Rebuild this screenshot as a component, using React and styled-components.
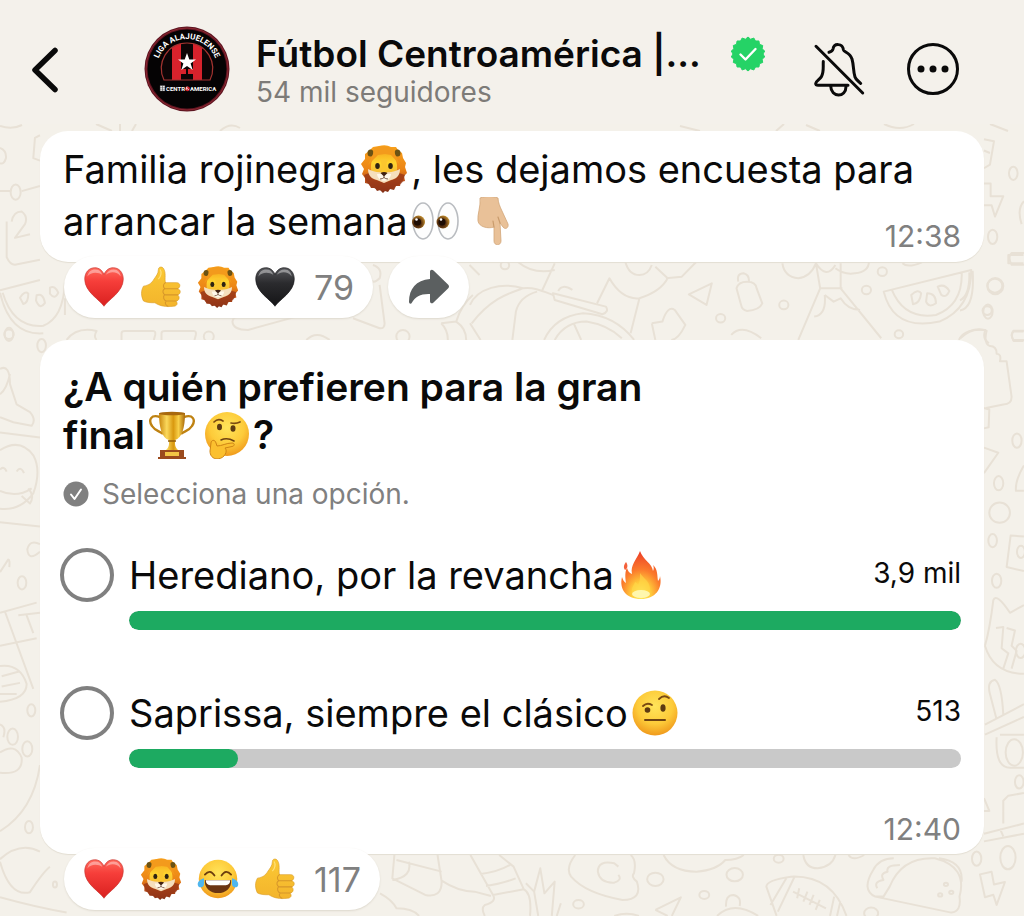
import { useState } from 'react';
import styled, { createGlobalStyle } from 'styled-components';

const OPTIONS = [
  { id: 'herediano', label: 'Herediano, por la revancha', emoji: 'fire', votes: 3900, count: '3,9 mil' },
  { id: 'saprissa', label: 'Saprissa, siempre el clásico', emoji: 'eyebrow', votes: 513, count: '513' },
];
const MAX_VOTES = 3900;

const Gradients = () => (
  <HiddenSvg aria-hidden="true">
    <defs>
      <linearGradient id="red" x1="0" y1="0" x2="0" y2="1">
        <stop offset="0" stopColor="#ff6a5c" />
        <stop offset="0.35" stopColor="#f63e3a" />
        <stop offset="1" stopColor="#d9201f" />
      </linearGradient>
      <linearGradient id="black" x1="0" y1="0" x2="0" y2="1">
        <stop offset="0" stopColor="#55565a" />
        <stop offset="0.4" stopColor="#2b2b2e" />
        <stop offset="1" stopColor="#141416" />
      </linearGradient>
      <linearGradient id="mane" x1="0" y1="0" x2="0" y2="1">
        <stop offset="0" stopColor="#f9a21c" />
        <stop offset="0.5" stopColor="#ec8616" />
        <stop offset="0.72" stopColor="#c4561c" />
        <stop offset="1" stopColor="#7c2c16" />
      </linearGradient>
      <linearGradient id="lionFace" x1="0" y1="0" x2="0" y2="1">
        <stop offset="0" stopColor="#f6a81e" />
        <stop offset="0.4" stopColor="#ffd42e" />
        <stop offset="1" stopColor="#f0a93a" />
      </linearGradient>
      <linearGradient id="thumb" x1="0" y1="0" x2="0" y2="1">
        <stop offset="0" stopColor="#fbc934" />
        <stop offset="1" stopColor="#f3b42c" />
      </linearGradient>
      <radialGradient id="face" cx="0.5" cy="0.35" r="0.65">
        <stop offset="0" stopColor="#ffe45a" />
        <stop offset="0.6" stopColor="#fdcb3a" />
        <stop offset="1" stopColor="#f09a1c" />
      </radialGradient>
      <linearGradient id="gold" x1="0" y1="0" x2="1" y2="0">
        <stop offset="0" stopColor="#c8860f" />
        <stop offset="0.3" stopColor="#fbd95c" />
        <stop offset="0.55" stopColor="#d9980f" />
        <stop offset="0.75" stopColor="#f8cf48" />
        <stop offset="1" stopColor="#a96808" />
      </linearGradient>
      <radialGradient id="flame" cx="0.5" cy="0.9" r="0.85">
        <stop offset="0" stopColor="#fff36b" />
        <stop offset="0.3" stopColor="#ffc93a" />
        <stop offset="0.6" stopColor="#fb7c2c" />
        <stop offset="1" stopColor="#ee4528" />
      </radialGradient>
      <radialGradient id="iris" cx="0.4" cy="0.6" r="0.6">
        <stop offset="0" stopColor="#2a1405" />
        <stop offset="0.55" stopColor="#5d3410" />
        <stop offset="1" stopColor="#b9862c" />
      </radialGradient>
    </defs>
  </HiddenSvg>
);

const HEART = 'M24 46C20 39 2 30 2 15C2 7 7 2 13.500 2C18.500 2 22 5 24 9.500C26 5 29.500 2 34.500 2C41 2 46 7 46 15C46 30 28 39 24 46Z';

const EMOJIS = {
  heart: {
    title: '❤️',
    art: (
      <>
        <path d={HEART} fill="url(#red)" stroke="#c93a34" strokeWidth="0.8" />
        <path d="M5 12C6 7 9 4 14 4C18 4 21 6 22 10C18 7 9 6 5 12Z" fill="#fff" opacity="0.4" />
        <path d="M26 10C28 6 31 4 35 4C40 4 43 8 43 12C39 6 31 6 26 10Z" fill="#fff" opacity="0.4" />
      </>
    ),
  },
  blackHeart: {
    title: '🖤',
    art: (
      <>
        <path d={HEART} fill="url(#black)" stroke="#1a1a1c" strokeWidth="0.8" />
        <path d="M5 12C6 7 9 4 14 4C18 4 21 6 22 10C18 7 9 6 5 12Z" fill="#fff" opacity="0.4" />
        <path d="M26 10C28 6 31 4 35 4C40 4 43 8 43 12C39 6 31 6 26 10Z" fill="#fff" opacity="0.4" />
      </>
    ),
  },
  thumb: {
    title: '👍',
    art: (
      <>
        <path
          d="M21 4C21 1 25 0 27 3C30 8 28 14 29 19H42C46 19 47 24 43 26C47 27 47 32 43 33C46 35 45 40 41 40C44 43 42 46 38 46C30 47 23 46 17 42C12 42 8 42 4 40C1 34 1 28 4 23C10 22 13 20 16 15C18 12 21 9 21 4Z"
          fill="url(#thumb)"
          stroke="#d99a22"
          strokeWidth="0.7"
        />
        <path d="M29 19C26 21 26 25 29 26M30 26H43M28 26C25 28 26 32 29 33H43M28 33C26 35 27 39 30 40H41M30 40C28 42 29 45 32 46" fill="none" stroke="#d6962a" strokeWidth="1.200" strokeLinecap="round" />
        <path d="M23 4C25 7 24 12 21 15" fill="none" stroke="#ffe07a" strokeWidth="1.400" />
      </>
    ),
  },
  lion: {
    title: '🦁',
    art: (
      <>
        <path
          d="M19 1Q26 -1 31 2L36 2L38 5L42 8L43 13L46 18L45 22L47 28L44 31L45 36L41 37L40 41L36 41L34 45L30 44L28 47L25 46L23 48L20 45L17 46L15 43L11 43L9 39L5 38L5 33L2 29L4 24L1 19L5 14L5 9L9 6L13 2Z"
          fill="url(#mane)"
        />
        <path d="M4 30L9 28L13 34L24 38L35 34L39 28L45 30L42 38L36 41L30 44L25 46L18 45L10 41L6 36Z" fill="#943618" opacity="0.75" />
        <ellipse cx="10.500" cy="8" rx="3" ry="3.500" fill="#6b5214" />
        <ellipse cx="37.500" cy="8" rx="3" ry="3.500" fill="#6b5214" />
        <path d="M24 6C32 6 36 12 37 20C38 29 33 36 24 36C15 36 10 29 11 20C12 12 16 6 24 6Z" fill="url(#lionFace)" />
        <path d="M14 3Q24 -1 34 4L35 9L40 20L31 10L25 9L18 10L8 20L13 9Z" fill="#f39a1c" />
        <path d="M8 24C12 26 18 28 22 27H26C30 28 36 26 40 24C40 31 36 34 31 35L24 38L17 35C12 34 8 31 8 24Z" fill="#f5dfbd" />
        <path d="M17 29C18 38 30 38 31 29Z" fill="#fff8ea" />
        <path d="M20 14C22 19 22 23 21 28H27C26 23 26 19 28 14Z" fill="#fbc62e" />
        <ellipse cx="17.500" cy="21" rx="2.300" ry="3" fill="#2e2312" />
        <ellipse cx="30.500" cy="21" rx="2.300" ry="3" fill="#2e2312" />
        <path d="M20.500 28Q24 26 27.500 28L24 31.500Z" fill="#3f2013" />
        <path d="M24 31V33M20 34Q22.500 34 24 32.500Q25.500 34 28 34" fill="none" stroke="#7a5a48" strokeWidth="1" />
      </>
    ),
  },
  eyes: {
    title: '👀',
    art: (
      <>
        <ellipse cx="12" cy="24" rx="10" ry="18" fill="#fdfdfd" stroke="#b9bcc0" strokeWidth="1.600" />
        <ellipse cx="37" cy="24" rx="10" ry="18" fill="#fdfdfd" stroke="#b9bcc0" strokeWidth="1.600" />
        <circle cx="7.500" cy="25" r="6.500" fill="url(#iris)" />
        <circle cx="32" cy="25" r="6.500" fill="url(#iris)" />
        <circle cx="6.500" cy="25" r="3.500" fill="#1e0d04" />
        <circle cx="31" cy="25" r="3.500" fill="#1e0d04" />
        <circle cx="5.500" cy="22.500" r="1.300" fill="#fff" />
        <circle cx="30" cy="22.500" r="1.300" fill="#fff" />
      </>
    ),
  },
  pointDown: {
    title: '👇🏼',
    art: (
      <>
        <path
          d="M5 1C10 -1 18 -1 23 1C23 5 25 10 27 14L33 27C34 31 30 33 28 30L25 26L26 44C26 49 19 49 19 44V30C13 32 4 30 3 24C2 18 6 9 5 1Z"
          fill="#e9c198"
          stroke="#d2a678"
          strokeWidth="0.800"
        />
        <path d="M19 30L18 24M25 26L23 20" fill="none" stroke="#c99b6c" strokeWidth="1.200" strokeLinecap="round" />
      </>
    ),
  },
  trophy: {
    title: '🏆',
    art: (
      <>
        <path d="M12 6C3 3 0 9 4 15C7 20 12 20 15 23M36 6C45 3 48 9 44 15C41 20 36 20 33 23" fill="none" stroke="#bf8212" strokeWidth="2.400" />
        <path d="M11 2H37C37 17 34 27 27 29V33C27 36 29 38 31 40H17C19 38 21 36 21 33V29C14 27 11 17 11 2Z" fill="url(#gold)" />
        <ellipse cx="24" cy="2.500" rx="13" ry="1.800" fill="#a8690e" />
        <path d="M12 39H36V46H38V48H10V46H12Z" fill="#9b4a1d" />
        <path d="M17 41H31V45H17Z" fill="#f3c545" />
        <path d="M20 30H28" stroke="#8f5a08" strokeWidth="1.500" />
      </>
    ),
  },
  thinking: {
    title: '🤔',
    art: (
      <>
        <circle cx="25" cy="23" r="22" fill="url(#face)" />
        <path d="M12 11Q16 7 21 10M29 12Q34 13 38 11" fill="none" stroke="#7a4a12" strokeWidth="1.700" strokeLinecap="round" />
        <ellipse cx="17.500" cy="16" rx="2.500" ry="3.300" fill="#5d3a12" />
        <ellipse cx="31" cy="17.500" rx="2.500" ry="3.300" fill="#5d3a12" />
        <path d="M19 29Q25 26 32 30" fill="none" stroke="#6e4212" strokeWidth="1.600" strokeLinecap="round" />
        <path
          d="M9 32C9 29 13 28 14 32L15 35C20 35 24 32 30 32C33 32 33 35 30 35.500L23 37C26 40 23 47 16 48C10 48 8 44 8 40Z"
          fill="#fbc02f"
          stroke="#cf8515"
          strokeWidth="1"
        />
      </>
    ),
  },
  fire: {
    title: '🔥',
    art: (
      <>
        <path
          d="M23 0C26 9 35 12 36 20C37 18 37 16 36 14C41 18 40 25 41 30C42 29 43 27 43 25C46 38 38 48 24 48C9 48 2 38 5 26C6 29 7 31 9 32C8 26 8 20 10 17C11 20 12 22 15 23C13 14 20 8 23 0Z"
          fill="url(#flame)"
        />
        <path d="M9 11C7 14 6 16 8 19C11 17 11 14 9 11Z" fill="#f4603a" />
        <path d="M23 22C26 27 33 30 33 38C33 44 29 47 24 47C18 47 14 43 15 38C16 34 17 34 18 31C20 32 21 33 21 34C23 31 23 27 23 22Z" fill="#ffd84a" opacity="0.6" />
        <ellipse cx="24" cy="43" rx="9" ry="4" fill="#fff9b8" opacity="0.9" />
      </>
    ),
  },
  eyebrow: {
    title: '🤨',
    art: (
      <>
        <circle cx="24" cy="24" r="22.500" fill="url(#face)" />
        <path d="M12 17Q16 13 21 16M28 10Q33 5 38 9" fill="none" stroke="#7a4a12" strokeWidth="1.800" strokeLinecap="round" />
        <ellipse cx="16.500" cy="21" rx="2.800" ry="2.800" fill="#5d3a12" />
        <ellipse cx="32" cy="19" rx="2.600" ry="3.800" fill="#5d3a12" />
        <path d="M14 31H34" stroke="#6e4212" strokeWidth="2" strokeLinecap="round" />
      </>
    ),
  },
  joy: {
    title: '😂',
    art: (
      <>
        <circle cx="24" cy="24" r="22" fill="url(#face)" />
        <path d="M9 19Q15 12 20 20M28 20Q33 12 39 19" fill="none" stroke="#6b3d0e" strokeWidth="2" strokeLinecap="round" />
        <path d="M9 25H39C40 34 33 40 24 40C15 40 8 34 9 25Z" fill="#6b3512" />
        <path d="M10 25.500H38C38 29 36 31 33 31H15C12 31 10 29 10 25.500Z" fill="#fff" />
        <path d="M8 23C4 24 0 27 1 31C2 35 8 34 8 30ZM40 23C44 24 48 27 47 31C46 35 40 34 40 30Z" fill="#4fb6ee" />
      </>
    ),
  },
};

const Emoji = ({ name, size }) => (
  <EmojiSvg viewBox="0 0 48 48" role="img" aria-label={EMOJIS[name].title} $size={size}>
    {EMOJIS[name].art}
  </EmojiSvg>
);

const ClubLogo = () => (
  <LogoSvg viewBox="0 0 86 86" role="img" aria-label="Liga Alajuelense Centroamérica">
    <circle cx="43" cy="43" r="42.500" fill="#5c1420" />
    <circle cx="43" cy="43" r="41" fill="none" stroke="#8d2731" strokeWidth="1" />
    <circle cx="43" cy="43" r="39.500" fill="#050304" />
    <clipPath id="crest">
      <path d="M20 54C12 37 23 17 43 17C63 17 74 37 66 54Z" />
    </clipPath>
    <g clipPath="url(#crest)">
      <rect x="10" y="10" width="70" height="50" fill="#0d0506" />
      <rect x="28" y="15" width="9" height="42" fill="#d8222c" />
      <rect x="49" y="15" width="9" height="42" fill="#d8222c" />
      <rect x="28" y="43" width="30" height="5" fill="#d8222c" />
      <rect x="42" y="42" width="2" height="12" fill="#0d0506" />
    </g>
    <path d="M20 54C12 37 23 17 43 17C63 17 74 37 66 54Z" fill="none" stroke="#a23330" strokeWidth="1.200" />
    <path d="M43 27L45.300 33.500H52L46.600 37.500L48.700 44L43 40L37.300 44L39.400 37.500L34 33.500H40.700Z" fill="#fff" />
    <path id="arc" d="M14 34A30.500 30.500 0 0 1 72 34" fill="none" />
    <LogoText $size={8}>
      <textPath href="#arc" startOffset="50%" textAnchor="middle">LIGA ALAJUELENSE</textPath>
    </LogoText>
    <path d="M16 59.500H21V65H16ZM18.500 59.500V65M16 61.300H21M16 63.200H21" fill="#fff" stroke="#333" strokeWidth="0.500" />
    <LogoText x="41" y="65" textAnchor="end" $size={6}>CENTR</LogoText>
    <circle cx="43.500" cy="62.800" r="2.400" fill="#d8222c" />
    <path d="M42 61.500L45 64M43 60.500L42 64" stroke="#fff" strokeWidth="0.700" />
    <LogoText x="46" y="65" $size={6}>AMERICA</LogoText>
  </LogoSvg>
);

const Wallpaper = () => (
  <WallpaperSvg viewBox="0 0 1024 916" preserveAspectRatio="xMidYMin slice" aria-hidden="true">
    {/* top edge, under the header */}
    <path d="M0 126Q12 130 22 125M96 124L112 131M120 124V131M136 124L132 131M220 131Q230 122 240 128M680 126L700 131M784 124L776 131M806 125L820 131M884 124Q900 132 914 124M990 124L1008 131" />
    {/* strip between the two messages */}
    <g transform="translate(0 255) scale(0.333)">
      <path d="M200 255Q230 215 290 228Q280 245 290 255M365 255V235Q365 228 375 228H460Q468 228 466 240L462 255M485 255V235Q485 228 495 228H582Q590 228 588 240L584 255M890 185L745 225Q700 225 698 200Q700 185 720 185M920 255Q950 225 990 255M1060 190L1140 220Q1155 222 1155 205L1140 90M1120 30Q1150 40 1140 70Q1120 90 1110 70M1325 205L1370 200Q1385 150 1420 120M1325 205Q1345 225 1345 255M1370 200Q1400 220 1400 255M1410 30L1440 60M195 130V180" />
      <circle cx="27" cy="238" r="14" /><circle cx="627" cy="245" r="15" /><circle cx="1210" cy="245" r="20" />
    </g>
    <g transform="translate(470 255) scale(0.353 0.333)">
      <path d="M0 150C20 100 90 80 150 100C110 115 60 130 5 205M150 100C180 95 210 110 235 120M0 205L30 255M120 255L130 170Q140 125 190 110M205 105L240 25M135 20Q180 60 240 45M235 115L385 155Q395 170 375 178L240 135ZM250 108Q260 85 290 105M210 255Q240 185 320 175Q410 180 465 255M240 255Q270 200 330 200Q390 210 430 250M295 208L315 255M360 145L395 70Q430 135 480 130L455 235M480 130Q540 110 560 70L525 35M440 20Q450 60 480 60Q505 60 515 30M555 70L600 65L640 22M620 118L685 85L670 150ZM515 205L545 200Q560 150 580 165L610 210Q590 255 570 255M515 205L525 255" />
      <path d="M755 100Q760 80 785 80Q810 80 812 100L828 145Q820 165 785 168Q770 165 768 150ZM760 80Q755 55 775 55Q792 60 790 80M740 240Q770 205 825 250M885 25Q890 65 930 70Q965 65 980 25L992 100L930 255M980 25Q1010 75 1035 30M1050 25V100L1165 250M992 100H1055M1035 40Q1060 60 1090 55Q1130 50 1130 20M1005 120Q1010 180 975 185M1005 120L1030 140L1050 130Q1070 165 1105 165" />
      <path d="M1172 110L1420 45Q1420 160 1330 200Q1200 230 1172 110ZM1195 105Q1230 195 1320 180Q1395 150 1393 55M1250 120Q1270 100 1278 115Q1275 145 1255 148ZM1295 115Q1320 115 1320 145Q1300 160 1292 140ZM1325 95Q1345 85 1358 108Q1350 130 1335 120ZM1225 25Q1240 40 1280 22M1385 255Q1400 220 1460 225Q1450 250 1470 265M1568 0H1525V25H1568M1568 230H1540Q1530 240 1540 258H1568" />
      <circle cx="99" cy="31" r="12" /><circle cx="710" cy="190" r="13" /><circle cx="889" cy="150" r="13" /><circle cx="1123" cy="105" r="13" /><circle cx="1168" cy="50" r="13" /><circle cx="1487" cy="92" r="21" /><circle cx="1465" cy="167" r="13" /><circle cx="1215" cy="238" r="12" />
    </g>
    {/* left edge */}
    <g transform="translate(0 120) scale(0.333 0.508)">
      <path d="M0 55Q20 60 18 75Q12 88 0 85M120 30L105 35L100 75L120 80M0 140H30M65 140L120 130M20 200V270Q30 285 45 285L120 275M35 200Q40 180 65 180Q85 190 75 205L45 232L90 225M0 335L120 315M8 340Q40 410 130 405Q190 390 195 320M0 340Q30 425 130 420M60 350Q75 335 85 342Q85 360 70 362ZM110 345Q130 340 135 360Q120 375 108 355ZM150 330Q165 325 175 340Q165 355 150 342ZM0 490Q30 480 30 520L50 560L90 575Q110 590 95 602L40 595L0 585M30 500Q20 530 0 540M0 615L120 625M0 650Q60 625 100 660Q125 690 100 735Q60 770 0 765M0 688Q12 680 20 692M50 692Q62 680 72 695M0 730Q50 745 95 725M65 740L90 755Q105 740 85 725M0 792L120 800M120 850Q85 870 82 845Q90 825 120 835M0 890L25 865Q30 865 28 880M0 970L110 950M15 968L100 1120M55 975L120 970M0 1035L110 1020M80 975L100 1010M0 1075Q60 1070 80 1110Q80 1140 0 1145M5 1095L60 1085M5 1115L60 1108M0 1130L50 1130M0 1190Q20 1195 10 1215M0 1245Q45 1225 65 1255Q70 1290 0 1285M0 1400Q100 1360 120 1270M0 1455Q60 1420 120 1440M0 1460Q30 1530 90 1520Q130 1480 150 1470M0 1530Q110 1550 200 1560" />
      <circle cx="47" cy="142" r="15" /><circle cx="27" cy="422" r="13" /><circle cx="125" cy="444" r="13" /><circle cx="66" cy="911" r="13" /><circle cx="94" cy="1162" r="12" /><circle cx="38" cy="1214" r="16" /><circle cx="82" cy="1238" r="15" /><circle cx="87" cy="1392" r="12" /><circle cx="165" cy="1505" r="6" />
    </g>
    {/* right edge */}
    <g transform="translate(960 120) scale(0.333 0.508)">
      <path d="M72 38L102 42L90 88L72 95M72 60L90 65M72 125H92V150H130L105 190L95 168H72M192 160Q170 175 185 205M192 262H155Q142 270 155 285H192M38 297Q45 370 0 375M28 300Q30 345 0 355M0 430Q40 405 80 415Q70 440 90 445Q110 445 110 460Q125 460 120 475H140L155 545Q155 560 130 560L78 567M72 567L88 570L86 605L72 607M72 645L115 655L72 695M192 680Q165 710 168 730H192M192 415H160Q150 422 160 433H192M192 820L152 818L140 880L192 888M75 1035Q90 1000 100 945Q110 930 150 970L192 955M75 1035Q100 1090 192 1090M108 1000L130 998L125 1040L145 1050L130 1080M140 1000L165 1005L155 1035L170 1045L155 1080M90 1130Q80 1105 105 1102Q125 1110 130 1170M90 1130L110 1180M75 1190L192 1150M75 1210L192 1175M110 1215Q105 1275 150 1275H192M120 1210H192M72 1335L88 1360H72M130 1385V1340L145 1330L192 1325M72 1405L192 1385M72 1420L192 1405M120 1395L130 1410M60 1485L95 1480L102 1505L135 1500L110 1545L100 1525L75 1530Z" />
      <circle cx="160" cy="105" r="13" /><circle cx="98" cy="230" r="14" /><ellipse cx="106" cy="327" rx="24" ry="16" /><circle cx="84" cy="377" r="14" /><circle cx="171" cy="631" r="14" /><circle cx="116" cy="715" r="14" /><ellipse cx="119" cy="773" rx="31" ry="20" /><circle cx="98" cy="828" r="13" /><circle cx="110" cy="907" r="14" /><circle cx="183" cy="850" r="12" /><circle cx="182" cy="1045" r="14" /><circle cx="163" cy="1245" r="26" /><circle cx="178" cy="1303" r="13" /><circle cx="50" cy="1454" r="14" /><circle cx="144" cy="1452" r="23" />
    </g>
    {/* bottom strip */}
    <g transform="translate(380 850) scale(0.411 0.333)">
      <path d="M35 15L30 85L110 135Q150 145 150 95L140 15M30 90Q80 80 70 35M40 30L150 65M150 92Q190 125 230 125L270 138M220 15L245 70L275 135L350 118L325 50L290 15M245 72Q290 65 320 42M258 108Q300 100 330 85M275 135Q285 155 255 165Q245 175 255 198M350 118Q370 130 365 198M0 130Q30 150 40 175Q80 175 95 198M355 100L375 125L390 55L400 130L425 95L418 198M375 125L385 198M430 198L440 160M475 15Q450 55 465 80Q500 130 590 150Q640 150 625 95Q610 80 618 70Q625 30 610 15M580 50L570 40Q530 30 530 65Q535 100 570 98Q590 90 580 75M690 15Q710 65 770 65Q820 60 840 30Q870 30 885 15M670 180L732 142L710 198M670 180L700 198M570 198Q600 185 630 198" />
      <path d="M965 198L940 110Q940 90 1000 80Q1100 75 1135 198M990 82L950 165M1008 82L968 185M1105 140L1095 198M1120 155L1112 198M1005 125L1085 175M1020 115L1015 145M1040 125L1030 155M1055 135L1045 165M1070 150L1060 180M820 198Q860 150 920 198M842 170Q840 135 860 135Q880 140 875 168M1030 15Q1035 55 1065 55Q1100 50 1108 15M1140 15Q1150 35 1178 15M1205 140L1390 188Q1415 185 1410 140Q1430 50 1350 25Q1270 20 1240 110L1225 140ZM1205 140Q1170 120 1200 60Q1215 25 1250 25M1210 115Q1200 95 1225 90Q1215 70 1235 65Q1230 45 1265 45M1360 25Q1420 35 1415 95" />
      <circle cx="670" cy="88" r="20" /><circle cx="483" cy="163" r="13" /><circle cx="789" cy="135" r="12" /><circle cx="863" cy="74" r="20" /><circle cx="970" cy="26" r="12" /><circle cx="1195" cy="190" r="17" /><circle cx="1377" cy="103" r="5" /><circle cx="1363" cy="135" r="5" /><circle cx="1390" cy="127" r="5" />
    </g>
  </WallpaperSvg>
);

const scallop = Array.from({ length: 36 }, (_, i) => {
  const r = i % 2 ? 15 : 17;
  const a = (i * Math.PI) / 18;
  return `${(18 + r * Math.sin(a)).toFixed(2)},${(18 - r * Math.cos(a)).toFixed(2)}`;
}).join(' ');

const ChannelHeader = () => (
  <HeaderBox>
    <IconButton aria-label="Atrás" $width={32}>
      <svg width="32" height="48" viewBox="0 0 32 48" fill="none" stroke="#0a0a0a" strokeWidth="5.500" strokeLinecap="round" strokeLinejoin="round">
        <path d="M27 5.500L7 25L27 44.500" />
      </svg>
    </IconButton>
    <ClubLogo />
    <ChannelInfo>
      <NameRow>
        <ChannelName>Fútbol Centroamérica |...</ChannelName>
        <svg width="36" height="36" viewBox="0 0 36 36" role="img" aria-label="Verificado">
          <polygon points={scallop} fill="#25d366" stroke="#25d366" strokeLinejoin="round" />
          <path d="M10.500 18.500L15.500 23.500L25.500 13" fill="none" stroke="#fff" strokeWidth="2.400" strokeLinecap="round" strokeLinejoin="round" />
        </svg>
      </NameRow>
      <Followers>54 mil seguidores</Followers>
    </ChannelInfo>
    <IconButton aria-label="Activar notificaciones" $width={56}>
      <svg width="56" height="56" viewBox="0 0 56 56" fill="none" stroke="#0a0a0a" strokeWidth="3" strokeLinecap="round" strokeLinejoin="round">
        <path d="M4 5.300L50.700 52" />
        <path d="M17 11.300Q20.500 10.500 21 8C22 2 30.500 2 31.500 9C32 11 38 11.500 40 18C42 25 41 30 43 36C44 39 46 39.500 48.700 42.500" />
        <path d="M11.300 20.500C11 27 12 31 9.500 35.500C8 38.500 4 40 3.700 42.500Q3.500 44.300 6 44.300H36" />
        <path d="M18.700 45C19 57 34 57 34 45.500" />
      </svg>
    </IconButton>
    <IconButton aria-label="Más opciones" $width={52}>
      <svg width="52" height="52" viewBox="0 0 52 52" fill="#0a0a0a">
        <circle cx="26" cy="26" r="24.500" fill="none" stroke="#0a0a0a" strokeWidth="3" />
        <circle cx="14" cy="26" r="3.500" />
        <circle cx="26" cy="26" r="3.500" />
        <circle cx="38" cy="26" r="3.500" />
      </svg>
    </IconButton>
  </HeaderBox>
);

const Reactions = ({ emojis, count }) => (
  <ReactionPill aria-label={`${count} reacciones`}>
    {emojis.map((name) => (
      <Emoji key={name} name={name} size={42} />
    ))}
    <span>{count}</span>
  </ReactionPill>
);

const PollOption = ({ option, checked, onSelect }) => (
  <OptionRow>
    <Radio type="radio" name="final" id={option.id} checked={checked} onChange={() => onSelect(option.id)} />
    <OptionBody>
      <OptionTop>
        <OptionLabel htmlFor={option.id}>
          {option.label}
          <Emoji name={option.emoji} size={48} />
        </OptionLabel>
        <VoteCount>{option.count}</VoteCount>
      </OptionTop>
      <Track>
        <Fill style={{ width: `${(option.votes / MAX_VOTES) * 100}%` }} />
      </Track>
    </OptionBody>
  </OptionRow>
);

const App = () => {
  const [selected, setSelected] = useState(null);

  return (
    <Page>
      <GlobalStyle />
      <Gradients />
      <Wallpaper />
      <ChannelHeader />
      <Feed>
        <TextBubble>
          <MessageText>
            Familia rojinegra
            <Emoji name="lion" size={48} />, les dejamos encuesta para arrancar la semana
            <Emoji name="eyes" size={48} /> <Emoji name="pointDown" size={48} />
            <MessageTime>12:38</MessageTime>
          </MessageText>
        </TextBubble>
        <ReactionRow>
          <Reactions emojis={['heart', 'thumb', 'lion', 'blackHeart']} count="79" />
          <ShareButton aria-label="Reenviar">
            <svg width="42" height="36" viewBox="0 0 42 36" fill="#5b5f60">
              <path d="M22 3C22 0.500 24 0 25.500 1.500L40 15.500Q42 17.500 40 19.500L25.500 33.500C24 35 22 34.500 22 32V25C13 24.500 7 28 4 33.500C3 35.500 1 35 1 32.500C1 20 8 11 22 10Z" />
            </svg>
          </ShareButton>
        </ReactionRow>
        <PollBubble>
          <Question>
            ¿A quién prefieren para la gran final
            <Emoji name="trophy" size={48} />
            <Emoji name="thinking" size={48} />?
          </Question>
          <Hint>
            <svg width="26" height="26" viewBox="0 0 26 26" aria-hidden="true">
              <circle cx="13" cy="13" r="12.500" fill="#808080" />
              <path d="M8 13.500L11.500 18L18 8.500" fill="none" stroke="#fff" strokeWidth="2" strokeLinecap="round" strokeLinejoin="round" />
            </svg>
            Selecciona una opción.
          </Hint>
          <Options>
            {OPTIONS.map((option) => (
              <PollOption key={option.id} option={option} checked={selected === option.id} onSelect={setSelected} />
            ))}
          </Options>
          <PollTime>12:40</PollTime>
        </PollBubble>
        <ReactionRow>
          <Reactions emojis={['heart', 'lion', 'joy', 'thumb']} count="117" />
        </ReactionRow>
      </Feed>
    </Page>
  );
};

const GlobalStyle = createGlobalStyle`
  * {
    box-sizing: border-box;
  }

  body {
    margin: 0;
    background-color: #f4f1ea;
    color: #0a0a0a;
    font-family: Inter, 'Liberation Sans', sans-serif;
  }
`;

const Page = styled.div`
  position: relative;
  min-height: 100vh;
  overflow: hidden;
`;

const HiddenSvg = styled.svg`
  position: absolute;
  width: 0;
  height: 0;
`;

const WallpaperSvg = styled.svg`
  position: absolute;
  inset: 0;
  width: 100%;
  height: 100%;
  z-index: -1;
  fill: none;
  stroke: #e8e1d6;
  stroke-width: 2px;
  stroke-linejoin: round;

  * {
    vector-effect: non-scaling-stroke;
  }
`;

const EmojiSvg = styled.svg`
  width: ${({ $size }) => $size}px;
  height: ${({ $size }) => $size}px;
  flex: none;
  margin: 0 3px;
  vertical-align: -10px;
`;

const HeaderBox = styled.header`
  display: flex;
  align-items: center;
  height: 124px;
  padding: 14px 65px 0 28px;
  background-color: #f4f1eb;
`;

const IconButton = styled.button`
  display: flex;
  align-items: center;
  justify-content: center;
  flex: none;
  width: ${({ $width }) => $width}px;
  height: 56px;
  padding: 0;
  border: none;
  background: none;
  cursor: pointer;

  & + & {
    margin-left: 39px;
  }
`;

const LogoSvg = styled.svg`
  width: 86px;
  height: 86px;
  flex: none;
  margin-left: 84px;
`;

const LogoText = styled.text`
  fill: #fff;
  font-family: 'Liberation Sans Narrow', Roboto, sans-serif;
  font-size: ${({ $size }) => $size}px;
  font-weight: 700;
`;

const ChannelInfo = styled.div`
  flex: 1;
  min-width: 0;
  margin-left: 26px;
  padding-top: 6px;
`;

const NameRow = styled.div`
  display: flex;
  align-items: center;
  gap: 29px;
`;

const ChannelName = styled.h1`
  margin: 0;
  font-size: 37px;
  font-weight: 600;
  line-height: 40px;
  white-space: nowrap;
`;

const Followers = styled.p`
  margin: 0;
  color: #7d7b78;
  font-size: 28px;
  line-height: 36px;
`;

const Feed = styled.main`
  padding: 7px 40px 5px;
`;

const Bubble = styled.article`
  background-color: #fff;
  border-radius: 28px;
  box-shadow: 0 1px 1px #e3ded3;
`;

const TextBubble = styled(Bubble)`
  padding: 12px 23px 15px;
`;

const MessageText = styled.p`
  margin: 0;
  font-size: 38px;
  line-height: 52px;
`;

const Time = styled.time`
  color: #808080;
  font-size: 30px;
  line-height: 28px;
`;

const MessageTime = styled(Time)`
  float: right;
  margin-top: 27px;
`;

const PollTime = styled(Time)`
  align-self: flex-end;
  margin-top: 47px;
`;

const ReactionRow = styled.div`
  position: relative;
  display: flex;
  gap: 15px;
  margin: -6px 0 22px;
  padding-left: 24px;

  &:last-child {
    margin-bottom: 0;
  }
`;

const PillButton = styled.button`
  display: flex;
  align-items: center;
  height: 62px;
  border: none;
  border-radius: 31px;
  background-color: #fff;
  box-shadow: 0 1px 2px #ddd8cd;
  cursor: pointer;
`;

const ReactionPill = styled(PillButton)`
  gap: 9px;
  padding: 0 19px 0 16px;
  color: #808080;
  font-family: inherit;
  font-size: 34px;

  span {
    margin-left: 6px;
  }
`;

const ShareButton = styled(PillButton)`
  justify-content: center;
  width: 81px;
  padding: 0;
`;

const PollBubble = styled(Bubble)`
  display: flex;
  flex-direction: column;
  padding: 23px 23px 11px;
`;

const Question = styled.h2`
  max-width: 640px;
  margin: 0;
  font-size: 39px;
  font-weight: 600;
  line-height: 48px;
`;

const Hint = styled.p`
  display: flex;
  align-items: center;
  gap: 13px;
  margin: 17px 0 0;
  color: #808080;
  font-size: 28px;
  line-height: 36px;
`;

const Options = styled.div`
  display: flex;
  flex-direction: column;
  gap: 56px;
  margin-top: 36px;
`;

const OptionRow = styled.div`
  display: flex;
  gap: 15px;
`;

const Radio = styled.input`
  appearance: none;
  flex: none;
  width: 54px;
  height: 54px;
  margin: 0 0 0 -3px;
  border: 4px solid #808080;
  border-radius: 50%;
  cursor: pointer;

  &:checked {
    border-color: #1daa61;
    background-color: #1daa61;
  }
`;

const OptionBody = styled.div`
  flex: 1;
`;

const OptionTop = styled.div`
  display: flex;
  align-items: center;
  justify-content: space-between;
  height: 54px;
`;

const OptionLabel = styled.label`
  font-size: 38px;
  line-height: 52px;
`;

const VoteCount = styled.span`
  padding-bottom: 4px;
  font-size: 28px;
`;

const Track = styled.div`
  height: 19px;
  margin-top: 9px;
  border-radius: 10px;
  background-color: #c9c9c9;
  overflow: hidden;
`;

const Fill = styled.div`
  height: 100%;
  border-radius: 10px;
  background-color: #1daa61;
`;

export default App;
